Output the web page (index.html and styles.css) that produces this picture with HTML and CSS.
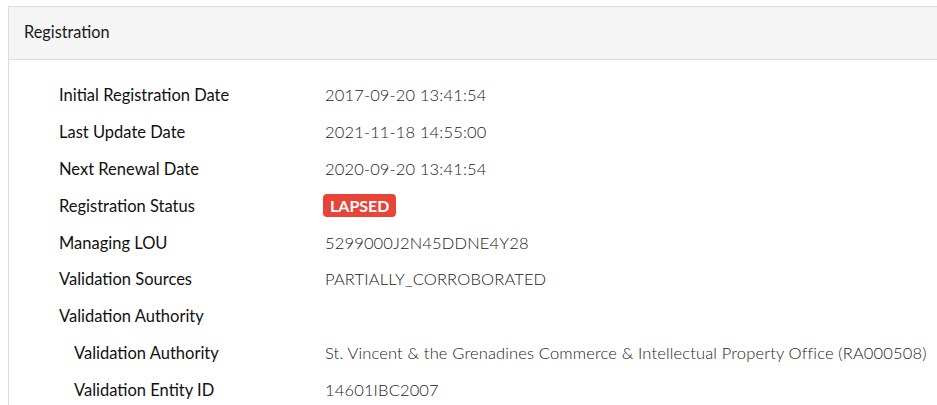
FILE: index.html
```html
<!DOCTYPE html>
<html lang="en">

<head>
    <meta charset="UTF-8">
    <meta name="viewport" content="width=device-width, initial-scale=1.0">
    <title>Registration</title>
    <link rel="stylesheet" href="styles.css">
</head>

<body>
    <div class="card">
        <div class="card-header">Registration</div>
        <div class="card-body">
            <div class="row">
                <div class="label">Initial Registration Date</div>
                <div class="value">2017-09-20 13:41:54</div>
            </div>
            <div class="row">
                <div class="label">Last Update Date</div>
                <div class="value">2021-11-18 14:55:00</div>
            </div>
            <div class="row">
                <div class="label">Next Renewal Date</div>
                <div class="value">2020-09-20 13:41:54</div>
            </div>
            <div class="row">
                <div class="label">Registration Status</div>
                <div class="value"><span class="badge">LAPSED</span></div>
            </div>
            <div class="row">
                <div class="label">Managing LOU</div>
                <div class="value">5299000J2N45DDNE4Y28</div>
            </div>
            <div class="row">
                <div class="label">Validation Sources</div>
                <div class="value">PARTIALLY_CORROBORATED</div>
            </div>
            <div class="row">
                <div class="label">Validation Authority</div>
                <div class="value"></div>
            </div>
            <div class="row sub">
                <div class="label">Validation Authority</div>
                <div class="value">St. Vincent &amp; the Grenadines Commerce &amp; Intellectual Property Office (RA000508)</div>
            </div>
            <div class="row sub">
                <div class="label">Validation Entity ID</div>
                <div class="value">14601IBC2007</div>
            </div>
        </div>
    </div>
</body>

</html>
```
FILE: styles.css
```css
body {
    margin: 0;
    padding: 6px 0 0 8px;
    background-color: #fff;
    font-family: Lato, "Noto Sans", sans-serif;
    color: #1a1a1a;
    overflow: hidden;
}

.card {
    width: 1000px;
    border: 1px solid #ddd;
    border-right: none;
}

.card-header {
    height: 53px;
    padding: 0 0 3px 15px;
    box-sizing: border-box;
    display: flex;
    align-items: center;
    background-color: #f5f5f5;
    border-bottom: 1px solid #ddd;
    font-size: 16.3px;
}

.card-body {
    padding: 17px 0 0 50px;
}

.row {
    display: grid;
    grid-template-columns: 266px 1fr;
    height: 36.8px;
    align-items: center;
    font-size: 16.5px;
}

.label {
    font-weight: 400;
    color: #111;
}

.value {
    font-weight: 300;
    color: #222;
    letter-spacing: 0.15px;
}

.row.sub .label {
    padding-left: 15px;
}

.badge {
    display: inline-block;
    margin-left: -2px;
    padding: 2px 7px;
    background-color: #e9443a;
    color: #fff;
    font-weight: 700;
    border-radius: 4px;
    font-size: 16px;
    letter-spacing: 0;
}
```
